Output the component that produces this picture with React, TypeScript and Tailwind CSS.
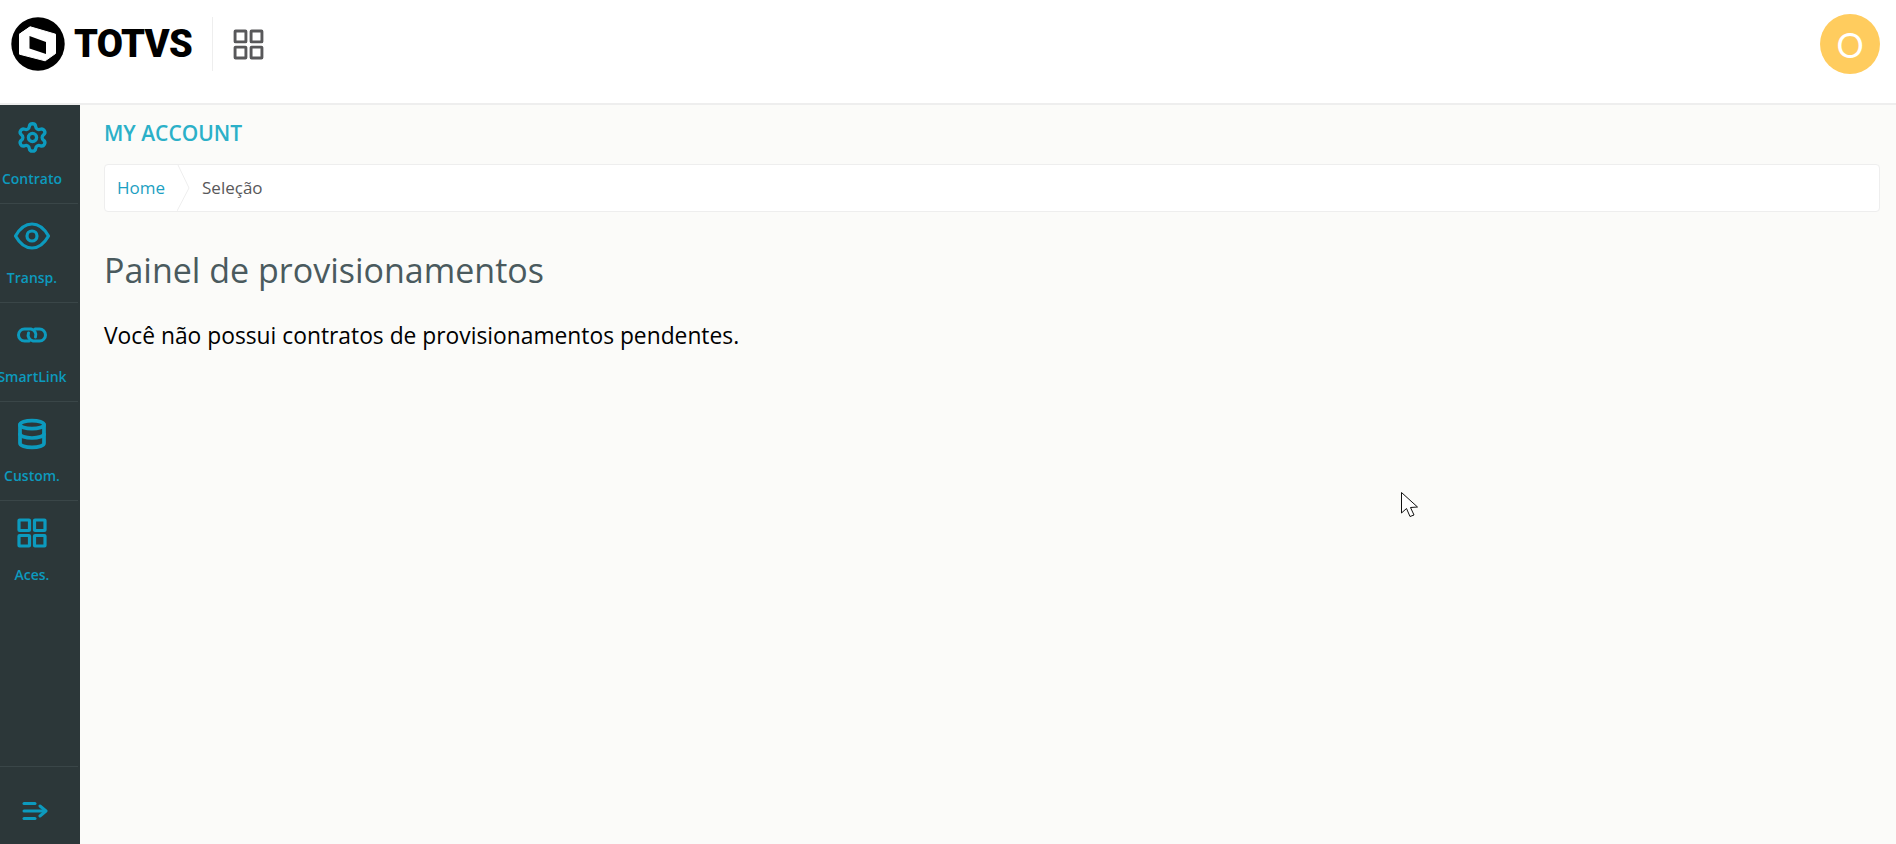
import { Settings, Database } from 'lucide-react';
import type { ReactNode } from 'react';

const SquaresIcon = ({ size, strokeWidth }: { size: number; strokeWidth: number }) => (
  <svg width={size} height={size} viewBox="0 0 30 30" fill="none" stroke="currentColor" strokeWidth={strokeWidth}>
    <rect x="2" y="2" width="10.5" height="10.5" rx="0.5" />
    <rect x="17.5" y="2" width="10.5" height="10.5" rx="0.5" />
    <rect x="2" y="17.5" width="10.5" height="10.5" rx="0.5" />
    <rect x="17.5" y="17.5" width="10.5" height="10.5" rx="0.5" />
  </svg>
);

const EyeIcon = () => (
  <svg width="38" height="30" viewBox="0 0 38 30" fill="none" stroke="currentColor" strokeWidth="3.2" strokeLinejoin="round">
    <path d="M2.5 15 C7 7 12.5 3 19 3 C25.5 3 31 7 35.5 15 C31 23 25.5 27 19 27 C12.5 27 7 23 2.5 15 Z" />
    <circle cx="19" cy="15" r="5" />
  </svg>
);

const LinkIcon = () => (
  <svg width="32" height="16" viewBox="0 0 32 16" fill="none" stroke="currentColor" strokeWidth="3" strokeLinecap="round">
    <path d="M13 14 H8.5 A6 6 0 0 1 8.5 2 H15 A6 6 0 0 1 19.5 10" />
    <path d="M19 2 H23.5 A6 6 0 0 1 23.5 14 H17 A6 6 0 0 1 12.5 6" />
  </svg>
);

const menuItems: { label: string; icon: ReactNode }[] = [
  { label: 'Contrato', icon: <Settings size={33} strokeWidth={2.4} /> },
  { label: 'Transp.', icon: <EyeIcon /> },
  { label: 'SmartLink', icon: <LinkIcon /> },
  { label: 'Custom.', icon: <Database size={32} strokeWidth={2.8} /> },
  { label: 'Aces.', icon: <SquaresIcon size={30} strokeWidth={3.2} /> },
];

const Logo = () => (
  <div className="flex items-center">
    <svg width="54" height="54" viewBox="0 0 54 54">
      <circle cx="27" cy="27" r="26.7" fill="#000" />
      <path d="M8.5 17.2 L19.2 9.8 L44.5 17.2 L44.5 36.5 L34.2 43.8 L8.5 37.2 Z" fill="#fff" stroke="#fff" strokeWidth="1" strokeLinejoin="round" />
      <path d="M18.5 19 L35 25 L35 37 L18.5 31.5 Z" fill="#000" />
      <path d="M8 17 L18.5 19 L19.2 9.6 Z" fill="#fff" />
    </svg>
    <span className="ml-[9px] font-['Roboto',sans-serif] text-[38px] leading-none font-black tracking-[-0.6px] text-black">
      TOTVS
    </span>
  </div>
);

const Cursor = () => (
  <svg className="absolute left-[1400px] top-[491px]" width="20" height="28" viewBox="0 0 20 28">
    <path d="M1.5 1.5 L1.5 22 L6.5 17.5 L10 25.5 L14 24 L10.5 16.5 L17.5 16 Z" fill="#fff" stroke="#111" strokeWidth="1" />
  </svg>
);

const App = () => {
  return (
    <div className="relative flex h-screen flex-col overflow-hidden bg-[#fbfbf9] font-['Open_Sans',sans-serif]">
      <header className="flex h-[105px] shrink-0 items-center border-b-2 border-[#eeeeee] bg-white pl-[11px] pr-[16px]">
        <div className="-mt-[15px] flex items-center">
          <Logo />
          <div className="ml-[20px] h-[54px] w-px bg-[#eeeeee]" />
          <div className="ml-[20px] text-[#58585a]">
            <SquaresIcon size={31} strokeWidth={2.8} />
          </div>
        </div>
        <div className="-mt-[15px] ml-auto flex h-[60px] w-[60px] items-center justify-center rounded-full bg-[#ffcc5e] font-['Lato',sans-serif] text-[34px] text-white">
          O
        </div>
      </header>

      <div className="flex min-h-0 flex-1">
        <aside className="flex w-[80px] shrink-0 flex-col overflow-hidden bg-[#2c3739]">
          {menuItems.map((item, index) => (
            <div
              key={item.label}
              className={`flex h-[99px] w-[78px] flex-col items-center whitespace-nowrap pt-[14px] text-[#0c9abe] ${index < menuItems.length - 1 ? 'border-b border-[#3a4648]' : ''}`}
            >
              <div className="flex h-[36px] w-[64px] items-center justify-center -translate-x-[7px]">{item.icon}</div>
              <span className="mt-[14px] w-[64px] -translate-x-[7px] text-center text-[14px] leading-[20px] font-semibold">
                <span className="-mx-[10px] inline-block">{item.label}</span>
              </span>
            </div>
          ))}
          <div className="mt-auto flex h-[78px] w-[78px] items-center justify-center border-t border-[#3a4648] pr-[8px] pt-[10px] text-[#0c9abe]">
            <svg width="26" height="20" viewBox="0 0 26 20" fill="none" stroke="currentColor" strokeWidth="3" strokeLinecap="round" strokeLinejoin="round">
              <path d="M2 2.5 H13" />
              <path d="M2 10 H23" />
              <path d="M2 17.5 H13" />
              <path d="M18 5 L24 10 L18 15" />
            </svg>
          </div>
        </aside>

        <main className="min-w-0 flex-1 pl-[24px] pr-[16px]">
          <h2 className="mt-[14px] text-[21px] leading-[29px] font-semibold text-[#2bb0c8]">MY ACCOUNT</h2>
          <nav className="mt-[16px] flex h-[48px] items-center rounded border border-[#eeeeee] bg-white text-[17px]">
            <span className="pl-[12px] text-[#1c9fc2]">Home</span>
            <svg className="ml-[12px] shrink-0" width="14" height="46" viewBox="0 0 14 46" fill="none" stroke="#eeeeee">
              <path d="M1 0 L12 23 L0 46" />
            </svg>
            <span className="ml-[11px] text-[#58585a]">Seleção</span>
          </nav>
          <h1 className="mt-[36px] text-[34px] leading-[44px] text-[#4a5a5e]">Painel de provisionamentos</h1>
          <p className="mt-[29px] text-[22.8px] leading-[30px] text-black">Você não possui contratos de provisionamentos pendentes.</p>
        </main>
      </div>

      <Cursor />
    </div>
  );
};

export default App;
